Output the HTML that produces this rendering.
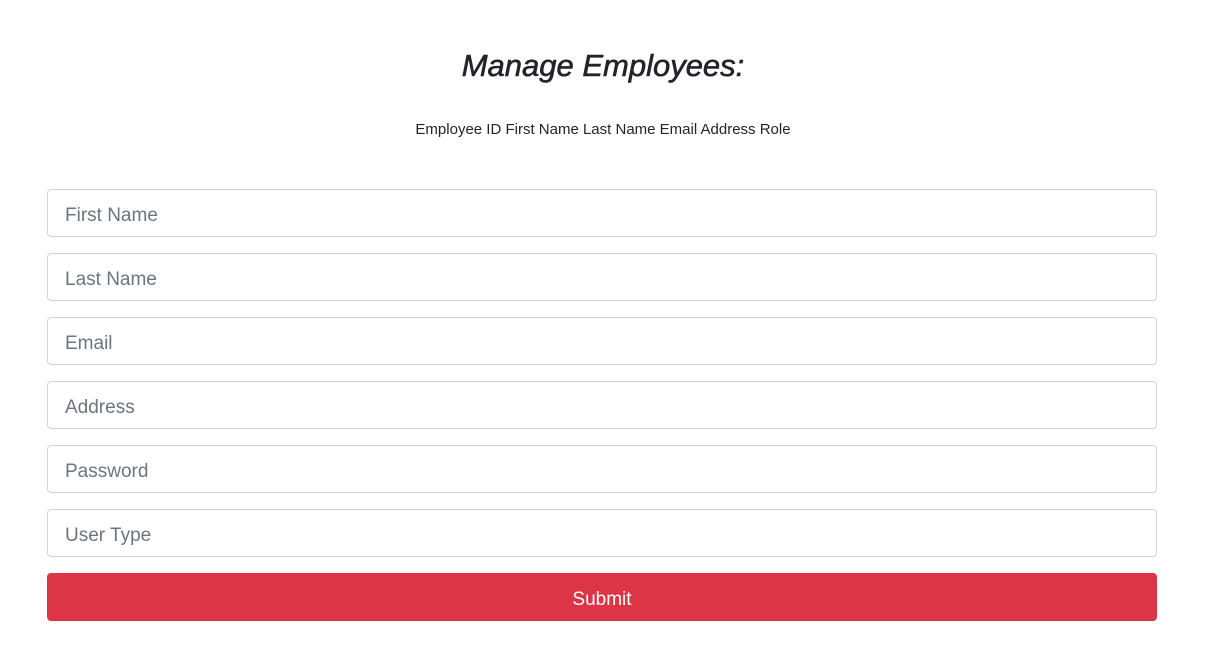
<!DOCTYPE html>
<html><head><style>
body{margin:0;background:#fff;font-family:"Liberation Sans",sans-serif;color:#212529;}
h2{margin:0;position:absolute;top:46px;left:0;width:1206px;text-align:center;font-size:31px;font-style:italic;font-weight:normal;line-height:40px;-webkit-text-stroke:0.6px #212529;}
.hdr{position:absolute;top:120px;left:0;width:1206px;text-align:center;font-size:15px;line-height:20px;}
.in{position:absolute;left:47px;border:1px solid #ced4da;border-radius:4px;box-sizing:border-box;width:1110px;height:48px;font-size:19px;color:#6c757d;padding-left:17px;padding-top:3px;line-height:46px;}
.btn{position:absolute;left:47px;top:573px;width:1110px;height:48px;background:#dc3545;border-radius:4px;color:#fff;font-size:19px;text-align:center;line-height:54px;box-sizing:border-box;height:48px;}
</style></head><body>
<h2>Manage Employees:</h2>
<div class="hdr">Employee ID First Name Last Name Email Address Role</div>
<div class="in" style="top:189px">First Name</div>
<div class="in" style="top:253px">Last Name</div>
<div class="in" style="top:317px">Email</div>
<div class="in" style="top:381px">Address</div>
<div class="in" style="top:445px">Password</div>
<div class="in" style="top:509px">User Type</div>
<div class="btn">Submit</div>
</body></html>
